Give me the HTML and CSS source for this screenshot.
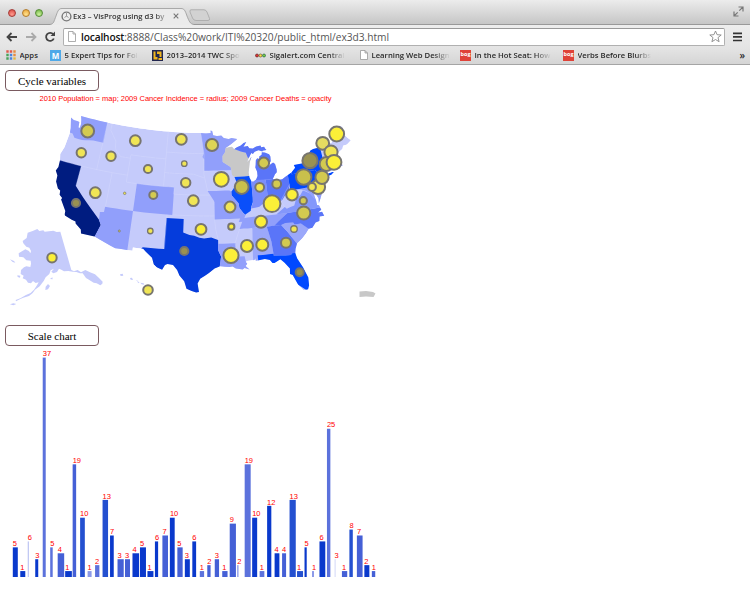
FILE: index.html
```html
<!DOCTYPE html>
<html lang="en">
<head>
<meta charset="utf-8">
<title>Ex3 – VisProg using d3</title>
<link rel="stylesheet" href="styles.css">
</head>
<body>
<header class="chrome">
  <div class="tabstrip">
    <div class="lights"><i class="light red"></i><i class="light amber"></i><i class="light green"></i></div>
    <div class="tab">
      <svg class="tab-shape" width="144" height="17" viewBox="0 0 144 17"><path d="M0 16.5C4 16 4 13 6 8C8 2 9 .5 12 .5H131C134 .5 135 2 137 8C139 13 140 16 144 16.5V17H0Z" fill="#ebebeb"/><path d="M0 16.5C4 16 4 13 6 8C8 2 9 .5 12 .5H131C134 .5 135 2 137 8C139 13 140 16 144 16.5" fill="none" stroke="#999" stroke-width=".8"/></svg>
      <svg class="favicon" width="11" height="11" viewBox="0 0 11 11"><circle cx="5.5" cy="5.5" r="4.4" fill="#eee" stroke="#777" stroke-width="1.4"/><path d="M5.5 1V5.500M3.500 6.500L5.500 5L7.500 6.500" fill="none" stroke="#999"/></svg>
      <span class="tab-title">Ex3 – VisProg using d3 by</span>
      <svg class="close" width="6" height="6" viewBox="0 0 6 6"><path d="M.7 .7L5.3 5.3M5.3 .7L.7 5.3" stroke="#777" stroke-width="1.1"/></svg>
    </div>
    <svg class="newtab" width="24" height="13" viewBox="0 0 24 13"><path d="M3 .8H16Q18 .8 19 3L21.5 9.5Q22 11.5 20 11.5H8Q5.500 11.500 4.500 9L2 3Q1.500.8 3 .8Z" fill="#d2d2d2" stroke="#aaa" stroke-width=".9"/></svg>
    <svg class="expand" width="11" height="11" viewBox="0 0 11 11"><path d="M5.500 1H10V5.500M10 1L6.300 4.700M1 5.500V10H5.500M1 10L4.700 6.300" fill="none" stroke="#777" stroke-width="1.2"/></svg>
  </div>
  <div class="toolbar">
    <svg class="nav" width="56" height="14" viewBox="0 0 56 14"><g fill="none" stroke-width="1.8"><path d="M17 7H8M11.500 3L7.500 7L11.500 11" stroke="#444"/><path d="M26 7H35M31.500 3L35.500 7L31.500 11" stroke="#aaa"/><path d="M53.300 4.500A4 4 0 1 0 53.800 8.500" stroke="#444"/></g><path d="M55 1.500V6H50.500Z" fill="#444"/></svg>
    <div class="address">
      <svg width="8" height="11" viewBox="0 0 8 11"><path d="M.5.5H5L7.500 3V10.500H.5ZM5 .5V3H7.500" fill="#fff" stroke="#999" stroke-width=".8"/></svg>
      <span class="url"><b>localhost</b>:8888/Class%20work/ITI%20320/public_html/ex3d3.html</span>
      <svg class="star" width="13" height="13" viewBox="0 0 13 13"><path d="M6.500 1L8.100 4.700L12.200 5L9 7.600L10.100 11.700L6.500 9.500L2.900 11.700L4 7.600L.8 5L4.900 4.700Z" fill="#fff" stroke="#888" stroke-width=".9"/></svg>
    </div>
    <svg width="9" height="10" viewBox="0 0 9 10"><path d="M0 1.300H9M0 4.900H9M0 8.500H9" stroke="#333" stroke-width="1.7"/></svg>
  </div>
  <nav class="bookmarks">
    <div class="bm apps"><svg width="10" height="10" viewBox="0 0 10 10"><path d="M.3 1.500H2.700M3.800 1.500H6.200" stroke="#e0584a" stroke-width="2.300"/><path d="M7.300 1.500H9.700M7.300 5H9.700" stroke="#e88a3e" stroke-width="2.300"/><path d="M.3 5H2.700M.3 8.500H2.700" stroke="#47a35a" stroke-width="2.300"/><path d="M3.800 5H6.200M3.800 8.500H6.200" stroke="#4b83dd" stroke-width="2.300"/><path d="M7.300 8.500H9.700" stroke="#e3b63e" stroke-width="2.300"/></svg><span>Apps</span></div>
    <div class="bm fade"><i class="ico m">M</i><span>5 Expert Tips for Fol</span></div>
    <div class="bm fade"><svg width="11" height="11" viewBox="0 0 11 11"><path d="M0 0H11V11H0Z" fill="#22264f"/><path d="M1.500 1.500H3.500V7H5.500V9.500H1.500ZM5 1.500H9.500V7H7.500V4H5ZM6.500 8H10V10H6.500Z" fill="#f0b51e"/></svg><span>2013–2014 TWC Spo</span></div>
    <div class="bm fade"><svg width="11" height="5" viewBox="0 0 11 5"><circle cx="2" cy="2.500" r="1.500" fill="#d33" stroke="#622" stroke-width=".7"/><circle cx="5.500" cy="2.500" r="1.500" fill="#fd4" stroke="#653" stroke-width=".7"/><circle cx="9" cy="2.500" r="1.500" fill="#7c4" stroke="#264" stroke-width=".7"/></svg><span>Sigalert.com Central</span></div>
    <div class="bm fade"><svg width="8" height="10" viewBox="0 0 8 10"><path d="M.5.5H5L7.500 3V9.500H.5ZM5 .5V3H7.500" fill="#fff" stroke="#999" stroke-width=".8"/></svg><span>Learning Web Design</span></div>
    <div class="bm fade"><i class="ico bog">bog</i><span>In the Hot Seat: How</span></div>
    <div class="bm fade"><i class="ico bog">bog</i><span>Verbs Before Blurbs</span></div>
    <span class="more">»</span>
  </nav>
</header>
<main>
  <button class="btn">Cycle variables</button>
  <svg class="map" width="750" height="234" viewBox="0 91 750 234">
    <text class="caption" x="39.500" y="100.700" textLength="292">2010 Population = map; 2009 Cancer Incidence = radius; 2009 Cancer Deaths = opacity</text>
    <clipPath id="land"><path id="land-path"/></clipPath>
    <g id="states" clip-path="url(#land)"></g>
    <g transform="translate(0 190) scale(.33333)" fill="#c5cbfb">
      <path d="M83 128L98 123L112 117L118 123L130 121L134 125L160 122L170 126L181 125L214 240L222 244L233 240L243 247L256 240L270 247L285 253L297 264L308 275L307 281L301 286L290 280L281 278L268 270L258 264L248 250L240 250L229 246L218 245L205 243L192 244L184 239L177 236L171 246L160 250L154 245L162 236L152 241L148 252L137 262L131 273L119 289L105 299L98 309L87 318L70 323L61 327L48 334L47 330L61 325L78 315L92 309L102 299L111 286L116 277L107 279L99 273L93 280L84 278L78 269L68 265L71 257L62 252L63 240L72 232L79 229L91 231L93 221L92 212L79 211L70 202L57 200L56 190L66 184L76 178L87 183L91 190L93 183L88 173L79 170L70 160L68 153L80 144Z"/>
      <path d="M30 208L42 213L46 218L38 216ZM52 256L61 257L60 263L53 261ZM137 290L144 282L150 288L144 298L136 300ZM150 267L157 262L158 268ZM30 343L40 340L49 342L40 346ZM360 253L368 251L370 257L362 258ZM390 264L396 263L399 270L392 269ZM407 271L416 273L414 275ZM412 276L418 276L417 280ZM421 278L431 280L433 284L425 283Z"/>
    </g>
    <path d="M359.500 291.500L366 291L373 292L375.500 293.500L373.500 297L366 296.500L359.500 297Z" fill="#c8c8c8"/>
    <g id="bubbles"></g>
  </svg>
  <button class="btn">Scale chart</button>
  <svg class="chart" width="750" height="240" viewBox="0 346 750 240"></svg>
</main>
<script src="charts.js"></script>
</body>
</html>
```
FILE: styles.css
```css
body { margin: 0; background: #fff; height: 594px; overflow: hidden; font-family: "Liberation Sans", sans-serif; }
svg { display: block; flex: none; }
.chrome { height: 65px; box-sizing: border-box; border-bottom: 1px solid #a5a5a5; font-family: "Open Sans", sans-serif; background: #e0e0e0; }
.tabstrip { height: 25px; box-sizing: border-box; display: flex; align-items: flex-end; background: linear-gradient(#ececec, #c6c6c6); border-bottom: 1px solid #999; }
.lights { display: flex; gap: 5.500px; padding: 0 0 7px 8px; width: 42px; }
.light { width: 8px; height: 8px; border-radius: 50%; box-sizing: border-box; border: 1px solid; flex: none; }
.red { background: radial-gradient(circle at 50% 75%, #ff9c90, #d8443d); border-color: #a43b37; }
.amber { background: radial-gradient(circle at 50% 75%, #ffe391, #e9a130); border-color: #b27c2d; }
.green { background: radial-gradient(circle at 50% 75%, #cef2a0, #69b13c); border-color: #568d39; }
.tab { width: 138px; height: 17px; display: flex; align-items: center; position: relative; margin-bottom: -1px; box-sizing: border-box; padding: 0 0 1px 11px; }
.tab-shape { position: absolute; left: 0; top: 0; }
.favicon, .tab-title, .close { position: relative; }
.tab-title { font-size: 7.600px; line-height: 15px; font-weight: 600; color: #333; margin-left: 1px; width: 97px; white-space: nowrap; overflow: hidden; -webkit-mask-image: linear-gradient(90deg, #000 84%, transparent); }
.close { margin-left: 3px; }
.newtab { margin: 0 auto 2px 0; }
.expand { margin: 0 6px 7px 0; }
.toolbar { height: 23px; display: flex; align-items: center; background: linear-gradient(#ededed, #e4e4e4); padding-right: 8px; }
.nav { margin-right: 7px; }
.address { flex: 1; height: 18px; box-sizing: border-box; margin-right: 8px; border: 1px solid #b0b0b0; border-top-color: #999; border-radius: 2px; background: #fff; display: flex; align-items: center; padding: 0 2px 0 4px; }
.url { font-size: 10.200px; line-height: 16px; color: #555; margin-left: 5px; white-space: nowrap; letter-spacing: -.03px; }
.url b { font-weight: 600; color: #111; letter-spacing: -.15px; }
.star { margin-left: auto; }
.bookmarks { height: 16px; display: grid; grid-template-columns: 44px 102px 103px 105px 100px 103px 97px auto; padding: 0 5px 0 6px; background: linear-gradient(#e4e4e4, #d5d5d5); font-size: 7.700px; line-height: 14px; color: #2a2a2a; font-weight: 600; }
.bm { display: flex; align-items: center; gap: 3.500px; height: 14px; padding-bottom: 1px; white-space: nowrap; }
.bm span { max-width: 80px; overflow: hidden; }
.fade span { -webkit-mask-image: linear-gradient(90deg, #000 78%, transparent); }
.ico { width: 11px; height: 11px; flex: none; color: #fff; font: 700 8px/11px "Open Sans", sans-serif; text-align: center; overflow: hidden; }
.m { background: #4fa9e8; }
.bog { background: #df4238; font-size: 5.500px; line-height: 9px; }
.more { text-align: right; font-size: 10px; }
main { padding-top: 5px; }
.btn { display: block; width: 94px; height: 21px; box-sizing: border-box; margin: 0 0 0 5px; padding: 0; border: 1px solid #7a5a60; border-radius: 4px; background: #fff; color: #000; font: 11px/18px "Liberation Serif", serif; }
.caption { fill: #f00; font-size: 7.500px; }
.chart text { fill: #f00; font-size: 7.500px; }
```
FILE: charts.js
```js
const NS = 'http://www.w3.org/2000/svg';
function add(parent, tag, attrs, text) {
  const el = document.createElementNS(NS, tag);
  for (const k in attrs) el.setAttribute(k, attrs[k]);
  if (text !== undefined) el.textContent = text;
  parent.appendChild(el);
  return el;
}

// Albers equal-area conic, parallels 29.5 and 45.5, central meridian 96W
const R = Math.PI / 180, N = 0.60284, C = 1.35122;
function project(lon, lat) {
  const rho = Math.sqrt(C - 2 * N * Math.sin(lat * R)) / N;
  const t = N * (lon + 96) * R;
  return [206.5 + 409.5 * rho * Math.sin(t), 394 * rho * Math.cos(t) - 301];
}
// "w lat w lat ..." with longitudes given in degrees west
function path(str, open) {
  const v = str.trim().split(/[\s,]+/).map(Number), pts = [];
  for (let i = 0; i < v.length; i += 2) pts.push([-v[i], v[i + 1]]);
  if (!open) pts.push(pts[0]);
  const out = [];
  for (let i = 0; i < pts.length - 1; i++) {
    const [a, b] = pts[i], [c, d] = pts[i + 1];
    const n = Math.max(1, Math.ceil(Math.abs(c - a)));
    for (let k = 0; k < n; k++) out.push(project(a + (c - a) * k / n, b + (d - b) * k / n));
  }
  const l = pts[pts.length - 1];
  out.push(project(l[0], l[1]));
  return 'M' + out.map(p => p[0].toFixed(1) + ' ' + p[1].toFixed(1)).join('L');
}

const nation = `124.7 48.38,124 48.17,123.1 48.15,122.75 48.1,122.6 47.3,122.3 47.3,122.3 47.9,122.5 48.5,122.76 49,95.15 49,95.15 49.38,94.8 49.3,94.6 48.7,93.8 48.55,92.9 48.6,92.4 48.25,91.4 48.07,90.8 48.2,89.6 48,
90.8 47.3,92.1 46.75,91.2 46.87,90.8 46.9,90.4 46.57,89.8 46.8,89 47,88.4 47.35,87.8 47.45,88.2 47.05,88.45 46.8,87.6 46.85,87.3 46.5,86.6 46.45,85.9 46.68,85 46.75,84.9 46.48,84.3 46.5,84.1 46.2,83.9 45.98,84.7 45.95,84.75 45.85,85.5 46.08,86.3 45.92,86.7 45.65,87 45.8,
87.6 45.1,88 44.55,87.4 44.9,87.05 45.25,87.5 44.4,87.7 43.7,87.9 43,87.8 42.3,87.5 41.7,87.1 41.65,86.6 41.9,86.25 42.4,86.25 43,86.5 43.65,86.4 44,86.25 44.7,85.95 44.95,85.55 44.8,85.5 45.2,85 45.4,84.9 45.75,84.3 45.65,83.5 45.35,83.3 45,83.35 44.3,83.9 43.9,83.9 43.65,83.4 43.9,82.95 44.07,82.6 43.8,82.45 43,82.5 42.6,82.9 42.35,83.15 42.05,83.45 41.72,
82.7 41.5,81.7 41.5,80.5 41.98,79.76 42.27,78.9 42.85,79.05 43.27,77.5 43.27,76.3 43.5,76.2 44.05,75.3 44.85,74.7 45,71.5 45.01,71.4 45.25,70.85 45.25,70.3 45.9,70 46.7,69.23 47.46,68.9 47.18,68.3 47.36,67.8 47.07,67.8 45.7,67.45 45.3,67 44.85,68 44.4,68.8 44.4,69.1 44,70.2 43.6,70.7 43.05,70.8 42.85,70.6 42.65,71 42.3,70.6 41.95,70.5 41.77,70 41.78,70.1 42.05,69.95 41.7,70.6 41.55,71.1 41.5,71.5 41.36,72.9 41.25,73.65 40.98,72.3 41.15,71.9 41.07,72.5 40.8,74 40.58,
74 40.4,74.1 39.75,74.9 38.95,75.5 39.5,75.4 39,75.08 38.7,75.1 38.3,75.6 37.6,75.95 37.15,75.8 37.9,76.3 38.9,76.1 39.4,76.5 39,76.4 38.3,76.3 37.6,76.3 37,75.98 36.9,75.75 36.2,76.4 35.9,75.7 35.9,75.5 35.25,76.3 35.3,76.5 34.65,77.2 34.55,77.9 33.9,78.55 33.85,79.2 33.2,79.9 32.65,80.9 32.05,81.3 31.3,81.45 30.7,81.3 29.9,80.6 28.5,80.05 26.9,80.15 25.75,80.4 25.2,81.1 25.15,81.75 25.95,82.1 26.8,82.4 27.6,82.8 27.8,82.7 28.6,83.4 29.5,84 30.1,85 29.65,85.35 29.7,85.7 30.15,86.5 30.38,87.5 30.28,88 30.25,88.05 30.6,88.2 30.35,89.4 30.3,89.6 30.15,89.4 29.9,89.7 29.6,89.1 29.05,89.9 29.3,90.2 29.1,91.3 29.3,91.8 29.6,92.3 29.55,
93.8 29.7,94.7 29.4,95.6 28.75,97 27.9,97.4 27.2,97.15 25.96,97.6 25.9,98.3 26.1,99.1 26.4,99.5 27.5,100.3 28.3,100.7 29.1,101.4 29.77,102.3 29.87,102.7 29.7,103.1 28.98,104 29.3,104.5 29.65,104.9 30.6,106 31.4,106.5 31.78,108.2 31.78,108.2 31.33,111.07 31.33,114.8 32.5,117.12 32.53,117.3 33.1,118.4 33.75,118.5 34.03,119.2 34.15,120.6 34.55,120.65 35.15,121.9 36.6,121.8 36.85,122.4 37.2,122.5 37.8,123 38,123.7 38.9,123.8 39.8,124.35 40.4,124.1 41,124.2 42,124.5 42.85,124.1 44,123.95 46.2,124.1 46.9`;
document.getElementById('land-path').setAttribute('d', path(nation));

const pale = '#c5cbfb', mid = '#919ffb', soft = '#9ba8fa', strong = '#5a75f8', vivid = '#0048ff';
const states = [
  [pale, nation],
  [mid, '125.5 48.7,124.9 46.3,123.4 46.2,122.8 45.7,121.2 45.65,119 46,116.92 46,117.03 49.2,123.5 49.2'],
  ['#001c80', '125 42,120 42,120 39,114.63 35,114.15 34.3,114.7 32.7,114.8 32.4,118 32,126 40'],
  [mid, '114.05 37,109.05 37,109.05 31.2,111.07 31.2,114.8 32.4,114.7 32.7,114.15 34.3,114.63 35,114.75 36.1,114.05 36.2'],
  [mid, '109.05 41,102.05 41,102.05 37,109.05 37'],
  ['#053cdc', '103.04 36.5,100 36.5,100 34.56,98.9 34.2,98.1 34.13,97.2 33.85,96.4 33.75,95.2 33.9,94.04 33.5,94.04 32,93.6 31.1,93.75 30.3,93.9 29.5,95 28,97 25.5,100 26,103 28.5,107 31.5,106.6 32,103.06 32'],
  [mid, '97.2 49,96.85 47.5,96.55 46,96.8 45.5,96.45 45.2,96.45 43.5,91.2 43.5,91.3 44,92.8 44.75,92.8 45.6,92.3 46.1,92.1 46.75,89 48.2,94 49.5,95.3 49.5,95.15 49'],
  ['#c8c8c8', '92.1 46.75,92.3 46.1,92.8 45.6,92.8 44.75,91.3 44,91.2 43.5,91.1 42.8,90.64 42.5,87 42.5,86.8 45.4,87.8 45.2,88.1 45.9,89.1 46.15,90.4 46.57,91 47.2'],
  [strong, '90.4 46.57,89.1 46.15,88.1 45.9,87.8 45.2,87.3 45,86.9 43,87 41.76,84.8 41.72,83.4 41.72,82 42,82 46,84 47,88 48'],
  ['#0a4ffa', '90.64 42.5,87 42.5,87.53 41.7,87.53 39.4,87.6 38.7,88 38,88.1 37.5,88.9 37.1,89.15 36.98,89.5 37.3,90.1 38,90.2 38.7,90.8 39.3,91.4 39.9,91.4 40.4,91 40.8,90.3 41.7'],
  ['#7b8efb', '87.53 41.9,84.8 41.76,84.8 39.1,85.5 38.5,86.5 37.95,88.05 37.8,87.55 38.7'],
  [strong, '84.8 41.72,83.4 41.72,82 41.8,80.52 42.1,80.52 40.6,80.85 39.7,81.8 39,82.2 38.6,82.6 38.4,83.6 38.65,84.3 38.8,84.8 39.1'],
  [mid, '95.8 40.6,91.75 40.6,91.4 40.4,91.4 39.9,90.8 39.3,90.2 38.7,90.1 38,89.5 37.3,89.1 36.95,89.6 36,90.35 36,90.1 36.5,94.6 36.5,94.6 39.1'],
  [mid, '94.04 33,91.15 33,91.1 32,91.6 31,89.75 31,89.6 30.2,88.5 29,92 28.5,93.9 29.5,93.75 30.3,93.6 31.1,94.04 32'],
  [mid, '90.3 35,88.2 35,84.3 35,83.1 35.8,81.7 36.6,83.7 36.6,88 36.6,89.5 36.5'],
  [soft, '88.2 35,85.6 35,85.1 32.8,85 31,87.6 31,87.5 30,88.4 30,88.4 31,88.1 34.9'],
  [strong, '85.6 35,83.1 35,82.2 33.9,80.9 32.1,81 30.7,82 30.75,82.2 30.5,85 30.7,85 31,85.1 32.8'],
  [vivid, '87.6 31,85 31,85 30.7,82.2 30.5,82 30.75,81 30.7,79.5 27,80 24.5,84 28,87.6 30'],
  [soft, '83.1 35,82.3 35.2,81 35.1,80.8 34.8,79.7 34.8,78.4 33.8,80.9 31.9,82.2 33.9'],
  [strong, '84.3 35,83.1 35,82.3 35.2,81 35.1,80.8 34.8,79.7 34.8,78.4 33.7,75 34.5,75 36.55,81.7 36.6,83.1 35.8'],
  ['#8497fb', '83.7 36.6,75 36.55,75 37.9,76.5 38,77.1 38.8,77.8 39.2,78.3 39.4,78.9 38.8,79.7 38.5,80.3 37.5,81.7 37.2,82 37.5'],
  [mid, '79.5 39.72,75.78 39.72,75.7 38.46,75 38.45,75.3 37.9,76.5 38,77.1 38.8,77.8 39.3,78.5 39.6'],
  [pale, '75.78 39.72,75.7 38.46,74.9 38.45,75.4 39.8'],
  [vivid, '80.52 42.4,79.76 42.3,79.76 42,75.3 42,74.7 41.4,75.1 41,75.1 40.2,74.8 40.1,75.5 39.8,75.78 39.72,80.52 39.72'],
  [vivid, '79.76 42.4,79.76 42,75.3 42,74.7 41.4,74 41,74 40.5,71.8 40.8,71.8 41.15,73.5 41.1,73.5 42,73.3 42.7,73.3 45.1,75 45.2,79.5 43.4'],
  ['#6a80fa', '74.7 41.4,73.9 41,74 39.5,74.9 38.8,75.5 39.6,74.8 40.1,75.1 40.6'],
  [mid, '73.5 42.05,73.3 42.75,71 42.85,69.5 42.8,69.5 41,71.1 41.4,71.4 42']
];
const land = document.getElementById('states');
for (const [fill, pts] of states) add(land, 'path', { d: path(pts), fill });

// faint internal borders
for (const b of [
  '124.2 42,111.05 42', '117 49,117 46,117 42', '120 42,120 39', '114 42,114 37', '111.05 45,111.05 41',
  '111.05 41,102.05 41', '111.05 45,104.05 45', '104.05 49,104.05 41', '104.05 46,96.6 46', '104.05 43,98.5 43,96.5 42.5',
  '102.05 41,102.05 40,95.3 40', '102.05 37,94.6 37', '103 37,103 32', '97.2 49,96.5 46,96.5 43,95.8 40.6', '96.5 43.5,91.2 43.5',
  '94.6 39,94.6 36.5,94.4 35,94 33.5', '94 33,91.2 33', '90.3 35,91.2 33,91 31', '116 49,116 48,114.5 46.600,114.3 45.5,113 44.5,111.05 44.500', '72.5 45,72.5 42.7', '71 45.3,70.8 43', '80.5 40.6,82.6 38.4,82 37.5'
]) add(land, 'path', { d: path(b, true), fill: 'none', stroke: '#dce0ff', 'stroke-width': .5, 'stroke-opacity': .6 });

const Y = '#fbef38', P = '#f0e555', D = '#d3ca50', K = '#999152';
const bubbles = [
  [87.7, 131, 7, D], [81.3, 152.7, 5.3, P], [111, 156.3, 5.3, P], [95.3, 192.7, 6, P], [124.700, 193.3, 1.3, P],
  [135.3, 140.7, 6, P], [181.3, 139.3, 6, P], [212, 145, 6.7, '#ddd455'], [184.3, 163.7, 3, P], [148, 169, 4.7, P],
  [185.7, 182.7, 5.3, P], [221.3, 179.3, 8, Y], [241.7, 187, 7.5, '#c9c04c'], [153.3, 195, 4.6, D], [193.3, 200.7, 6, P], [230, 207, 6, P],
  [263.7, 163, 6, D], [259.7, 187.3, 5, P], [276.7, 184, 5, D], [292, 194.7, 6.4, Y], [322.7, 143.3, 7, '#e5dc60'],
  [331, 152, 7.2, P], [326.5, 164, 7.5, D], [310, 160.7, 8.2, K], [303.7, 177, 8.3, '#c9c04c'],
  [318, 187, 7.7, P], [322, 177.3, 7.2, D], [312, 187, 4.5, P], [336.7, 134, 8, Y], [334, 162.3, 8, Y],
  [76, 203, 4.7, K], [52, 257.7, 5.3, Y], [119.3, 231, 1.1, D], [150.3, 231, 3, P], [148, 290, 5.4, P],
  [201, 229.3, 6, Y], [184.3, 251, 4.7, K], [231.3, 226.7, 3.7, Y], [231, 255.3, 8.2, Y], [247, 246, 6.6, Y],
  [272, 203.7, 9, Y], [261, 221.7, 6.6, Y], [262.3, 244.7, 6.6, Y], [303.3, 200.7, 4.2, D], [303.7, 213, 7.2, D],
  [294, 229, 3.5, P], [286, 242.7, 5.6, D], [299.7, 272.3, 4.6, K]
];
const bubbleLayer = document.getElementById('bubbles');
for (const [cx, cy, r0, fill] of bubbles) {
  const r = r0 + (r0 > 2 ? .4 : .3);
  const w = r > 4 ? 2 : r > 3 ? 1.3 : .7;
  add(bubbleLayer, 'circle', { cx, cy, r: r - w / 2, fill, stroke: '#77756f', 'stroke-width': w });
}

// value, bar width, colour strength
const shade = { a: '#0a39cc', b: '#2450d0', c: '#4560d6', d: '#5c72dc', e: '#8c9ae8', f: '#b0b9f0', g: '#dfe3fa' };
const bars = [
  [5, 5, 'a'], [1, 5, 'a'], [6, 1, 'f'], [3, 3, 'a'], [37, 3, 'd'], [5, 2.5, 'd'], [4, 6.5, 'c'], [1, 6.7, 'a'], [19, 3.5, 'c'], [10, 4.7, 'b'],
  [1, 4, 'e'], [2, 4.3, 'd'], [13, 5.5, 'b'], [7, 3.7, 'a'], [3, 6.2, 'c'], [3, 5, 'c'], [4, 6.6, 'a'], [5, 6, 'a'], [1, 6, 'a'], [6, 3.2, 'a'],
  [7, 5.6, 'c'], [10, 4.8, 'a'], [5, 5.3, 'c'], [3, 5, 'a'], [6, 3.8, 'a'], [1, 4.3, 'd'], [2, 3.3, 'c'], [3, 4.3, 'c'], [1, 5.3, 'c'], [9, 6.2, 'c'],
  [2, 1.3, 'e'], [19, 6, 'd'], [10, 5, 'a'], [1, 4.7, 'd'], [12, 4.2, 'a'], [4, 4.8, 'a'], [4, 4, 'c'], [13, 6.2, 'b'], [1, 6, 'b'], [5, 2.2, 'a'],
  [1, 2, 'e'], [6, 5.8, 'a'], [25, 3.4, 'd'], [3, 1.4, 'g'], [1, 5.3, 'c'], [8, 3.4, 'b'], [7, 5.7, 'c'], [2, 5, 'a'], [1, 3.4, 'c']
];
const chart = document.querySelector('.chart');
bars.forEach(([v, w, s], i) => {
  const x = 12.8 + 7.48 * i, h = v * 5.93;
  add(chart, 'rect', { x: x.toFixed(2), y: (577 - h).toFixed(2), width: w, height: h.toFixed(2), fill: shade[s] });
  add(chart, 'text', { x: x.toFixed(2), y: (575.7 - h).toFixed(2) }, v);
});
```
